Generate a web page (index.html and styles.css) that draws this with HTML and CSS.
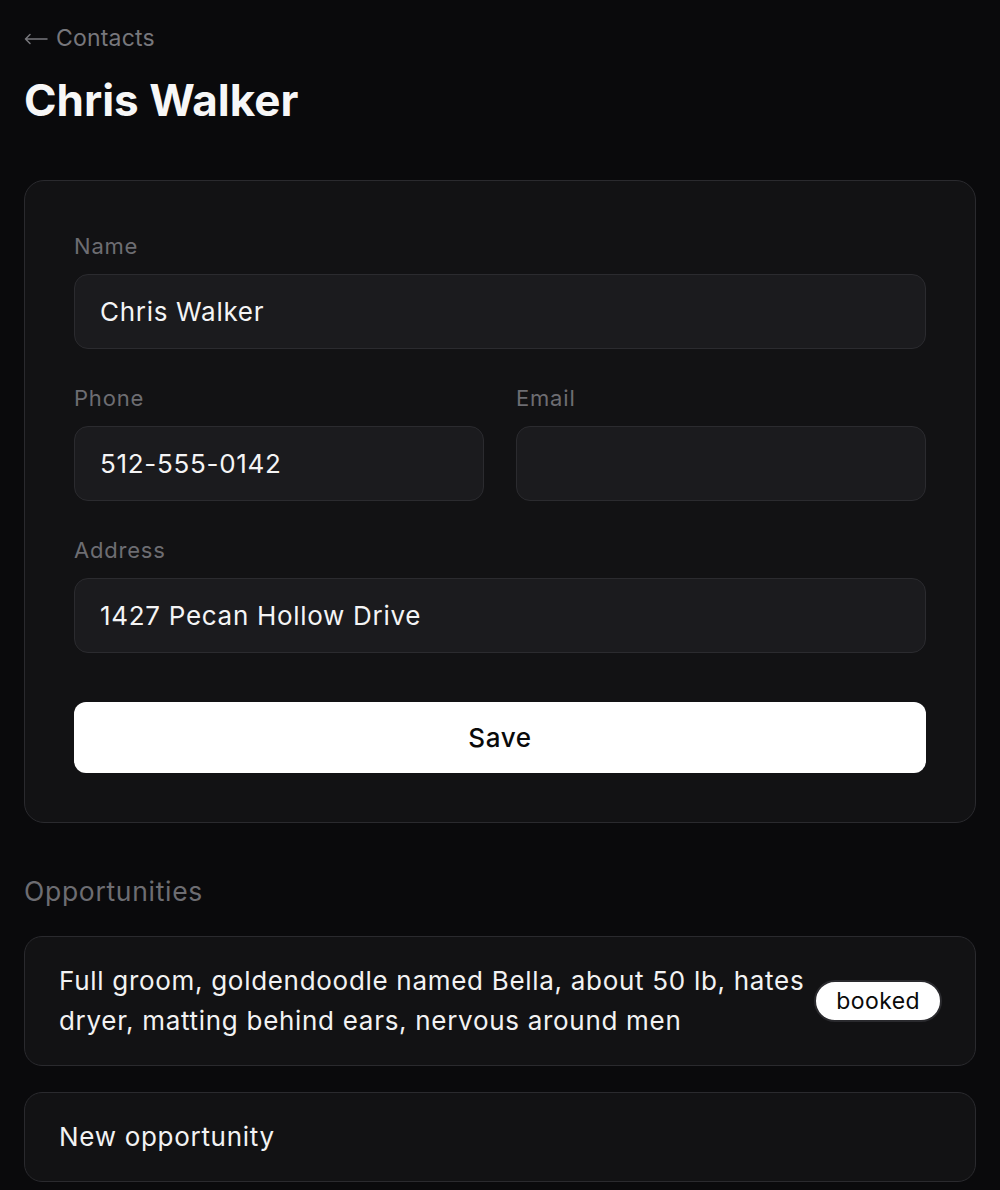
FILE: index.html
```html
<!DOCTYPE html>
<html>
<head>
<meta charset="utf-8">
<link rel="stylesheet" href="styles.css">
</head>
<body>
<div class="page">
  <a class="back" href="#"><svg class="back-arrow" width="24" height="12" viewBox="0 0 24 12" fill="none" stroke="currentColor" stroke-width="1.5" stroke-linecap="round" stroke-linejoin="round"><path d="M23 6H1.5M6 1.5L1.5 6L6 10.5"/></svg><span>Contacts</span></a>
  <h1 class="title">Chris Walker</h1>
  <form class="card form">
    <div class="field">
      <label class="label">Name</label>
      <div class="input">Chris Walker</div>
    </div>
    <div class="row">
      <div class="field">
        <label class="label">Phone</label>
        <div class="input">512-555-0142</div>
      </div>
      <div class="field">
        <label class="label">Email</label>
        <div class="input"></div>
      </div>
    </div>
    <div class="field">
      <label class="label">Address</label>
      <div class="input">1427 Pecan Hollow Drive</div>
    </div>
    <button class="save" type="button">Save</button>
  </form>
  <h2 class="section">Opportunities</h2>
  <div class="opps">
    <div class="card opp">
      <div class="opp-text">Full groom, goldendoodle named Bella, about 50 lb, hates dryer, matting behind ears, nervous around men</div>
      <span class="badge">booked</span>
    </div>
    <div class="card opp">
      <div class="opp-text">New opportunity</div>
    </div>
  </div>
</div>
</body>
</html>
```

FILE: styles.css
```css
* { box-sizing: border-box; }
html, body { margin: 0; padding: 0; background: #0a0a0c; }
body {
  font-family: Inter, "Noto Sans", sans-serif;
  color: #f2f2f3;
}
.page { padding: 23px 24px 0 24px; }
.back {
  display: flex;
  align-items: center;
  gap: 8px;
  font-size: 23px;
  line-height: 30px;
  letter-spacing: 0.2px;
  color: #77777c;
  text-decoration: none;
}
.back-arrow { flex: none; margin-top: 1px; }
.title {
  margin: 21px 0 0 0;
  font-size: 44px;
  line-height: 52px;
  font-weight: 700;
  letter-spacing: 0;
  color: #f7f7f7;
}
.card {
  background: #121214;
  border: 1px solid #2a2a2e;
  border-radius: 20px;
}
.form {
  margin: 54px 0 0 0;
  padding: 49px;
  display: flex;
  flex-direction: column;
  gap: 33px;
}
.row {
  display: grid;
  grid-template-columns: 1fr 1fr;
  gap: 32px;
}
.field { display: flex; flex-direction: column; gap: 12px; }
.label {
  font-size: 22px;
  line-height: 32px;
  letter-spacing: 0.8px;
  color: #6d6d72;
}
.input {
  height: 75px;
  background: #1b1b1e;
  border: 1px solid #2b2b2f;
  border-radius: 14px;
  padding: 0 25px;
  display: flex;
  align-items: center;
  font-size: 26px;
  letter-spacing: 0.7px;
  color: #f4f4f5;
}
.save {
  margin-top: 16px;
  height: 71px;
  border: none;
  border-radius: 12px;
  background: #ffffff;
  color: #0a0a0a;
  font-family: inherit;
  font-size: 26px;
  letter-spacing: 0.7px;
  font-weight: 500;
}
.section {
  margin: 49px 0 0 0;
  font-size: 26.5px;
  line-height: 38px;
  letter-spacing: 0.7px;
  font-weight: 400;
  color: #6d6d72;
}
.opps {
  margin-top: 26px;
  display: flex;
  flex-direction: column;
  gap: 26px;
}
.opp {
  border-radius: 18px;
  padding: 24px 33px 24px 34px;
  display: flex;
  align-items: center;
  gap: 10px;
}
.opp-text {
  flex: 1;
  font-size: 26px;
  line-height: 40px;
  letter-spacing: 0.7px;
  color: #f2f2f3;
}
.badge {
  flex: none;
  background: #ffffff;
  color: #0a0a0a;
  border: 2px solid #2a2a2e;
  border-radius: 999px;
  padding: 0 20px;
  height: 42px;
  display: flex;
  align-items: center;
  font-size: 23px;
  letter-spacing: 0.4px;
}
```
